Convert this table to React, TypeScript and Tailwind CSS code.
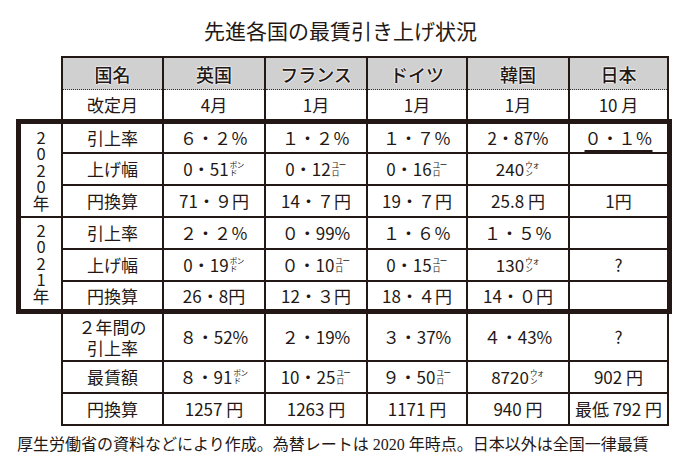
import type { ReactNode } from 'react';

type Val = string | { v: string; unit: string } | { u: string };

const block2020: { label: string; vals: Val[] }[] = [
  { label: '引上率', vals: ['６・２％', '１・２％', '１・７％', '2・87%', { u: '０・１％' }] },
  { label: '上げ幅', vals: [{ v: '0・51', unit: 'ポンド' }, { v: '0・12', unit: 'ユーロ' }, { v: '0・16', unit: 'ユーロ' }, { v: '240', unit: 'ウォン' }, ''] },
  { label: '円換算', vals: ['71・９円', '14・７円', '19・７円', '25.8 円', '1円'] },
  { label: '引上率', vals: ['２・２％', '０・99%', '１・６％', '１・５％', ''] },
  { label: '上げ幅', vals: [{ v: '0・19', unit: 'ポンド' }, { v: '０・10', unit: 'ユーロ' }, { v: '0・15', unit: 'ユーロ' }, { v: '130', unit: 'ウォン' }, '?'] },
  { label: '円換算', vals: ['26・8円', '12・３円', '18・４円', '14・０円', ''] },
];

const lower: { label: ReactNode; vals: Val[]; h: string }[] = [
  {
    label: (
      <span className="block w-[69px] leading-[21px] text-center whitespace-normal">２年間の引上率</span>
    ),
    vals: ['８・52%', '２・19%', '３・37%', '４・43%', '?'],
    h: 'h-[48px]',
  },
  {
    label: '最賃額',
    vals: [{ v: '８・91', unit: 'ポンド' }, { v: '10・25', unit: 'ユーロ' }, { v: '９・50', unit: 'ユーロ' }, { v: '8720', unit: 'ウォン' }, '902 円'],
    h: 'h-[32px]',
  },
  { label: '円換算', vals: ['1257 円', '1263 円', '1171 円', '940 円', '最低 792 円'], h: 'h-[32px]' },
];

const rowHeights = ['h-[30px]', 'h-[32px]', 'h-[32px]', 'h-[32px]', 'h-[32px]', 'h-[27px]'];

// small two-line currency unit set beside the number (ポン / ド)
function Unit({ unit }: { unit: string }) {
  return (
    <span className="block w-[15px] h-[16px] text-[7.5px] leading-[8px] ml-[1px] tracking-[-0.5px] break-all whitespace-normal">
      {unit}
    </span>
  );
}

function Value({ val }: { val: Val }) {
  if (typeof val === 'string') return <span>{val}</span>;
  if ('u' in val) {
    return <span className="underline decoration-[1.5px] underline-offset-[5px] px-[6px]">{val.u}</span>;
  }
  return (
    <span className="inline-flex items-center">
      <span>{val.v}</span>
      <Unit unit={val.unit} />
    </span>
  );
}

const line = 'border-[#231815]';

export default function App() {
  return (
    <div className="w-[687px] h-[471px] bg-white text-[#231815] font-['Noto_Sans_CJK_JP',sans-serif] overflow-hidden">
      {/* Title */}
      <div className="h-[56px] pt-[16px] flex justify-center pr-[6px]">
        <h1 className="text-[21px] leading-[28px] font-normal">先進各国の最賃引き上げ状況</h1>
      </div>

      {/* Header rows */}
      <div className={`ml-[61px] w-[608px] border-t-2 ${line} grid grid-cols-[101px_102px_102px_100px_102px_101px]`}>
        {['国名', '英国', 'フランス', 'ドイツ', '韓国', '日本'].map((h, i) => (
          <div
            key={h}
            className={`h-[32px] bg-[#d0d0d0] border-l-2 ${i === 5 ? 'border-r-2' : ''} ${line} relative flex items-center justify-center text-[18px] font-medium [text-shadow:0_0_2px_#fff,0_0_2px_#fff,0_0_1px_#fff]`}
          >
            {h}
            <div className="absolute left-0 right-0 bottom-0 border-b border-dotted border-[#333]" />
          </div>
        ))}
        {['改定月', '4月', '1月', '1月', '1月', '10 月'].map((h, i) => (
          <div
            key={i}
            className={`h-[29px] border-l-2 ${i === 5 ? 'border-r-2' : ''} ${line} flex items-center justify-center text-[17px]`}
          >
            {h}
          </div>
        ))}
      </div>

      {/* Thick box: 2020 / 2021 */}
      <div className={`ml-[16px] w-[656px] h-[195px] border-[5px] ${line} flex`}>
        <div className="w-[40px] flex flex-col text-[16.5px] leading-[40px]">
          <div className={`h-[94px] border-b-2 ${line} flex items-center justify-center`}>
            <span className="[writing-mode:vertical-rl] [text-orientation:upright]">2020年</span>
          </div>
          <div className="flex-1 flex items-center justify-center">
            <span className="[writing-mode:vertical-rl] [text-orientation:upright]">2021年</span>
          </div>
        </div>
        <div className="w-[606px] flex flex-col">
          {block2020.map((row, r) => (
            <div key={r} className={`grid grid-cols-[101px_102px_102px_100px_102px_99px] ${rowHeights[r]}`}>
              {[row.label as Val, ...row.vals].map((v, c) => (
                <div
                  key={c}
                  className={`border-l-2 ${r < 5 ? 'border-b-2' : ''} ${line} flex items-center justify-center text-[17px] whitespace-nowrap`}
                >
                  <Value val={v} />
                </div>
              ))}
            </div>
          ))}
        </div>
      </div>

      {/* Lower rows */}
      <div className="ml-[61px] w-[608px]">
        {lower.map((row, r) => (
          <div key={r} className={`grid grid-cols-[101px_102px_102px_100px_102px_101px] ${row.h}`}>
            <div className={`border-l-2 border-b-2 ${line} flex items-center justify-center text-[17px]`}>{row.label}</div>
            {row.vals.map((v, c) => (
              <div
                key={c}
                className={`border-l-2 border-b-2 ${c === 4 ? 'border-r-2' : ''} ${line} flex items-center justify-center text-[17px] whitespace-nowrap`}
              >
                <Value val={v} />
              </div>
            ))}
          </div>
        ))}
      </div>

      {/* Caption */}
      <p className="mt-[9px] pl-[17px] text-[16px] leading-[20px] whitespace-nowrap font-['Liberation_Serif','Noto_Sans_CJK_JP',serif]">
        厚生労働省の資料などにより作成。為替レートは 2020 年時点。日本以外は全国一律最賃
      </p>
    </div>
  );
}
